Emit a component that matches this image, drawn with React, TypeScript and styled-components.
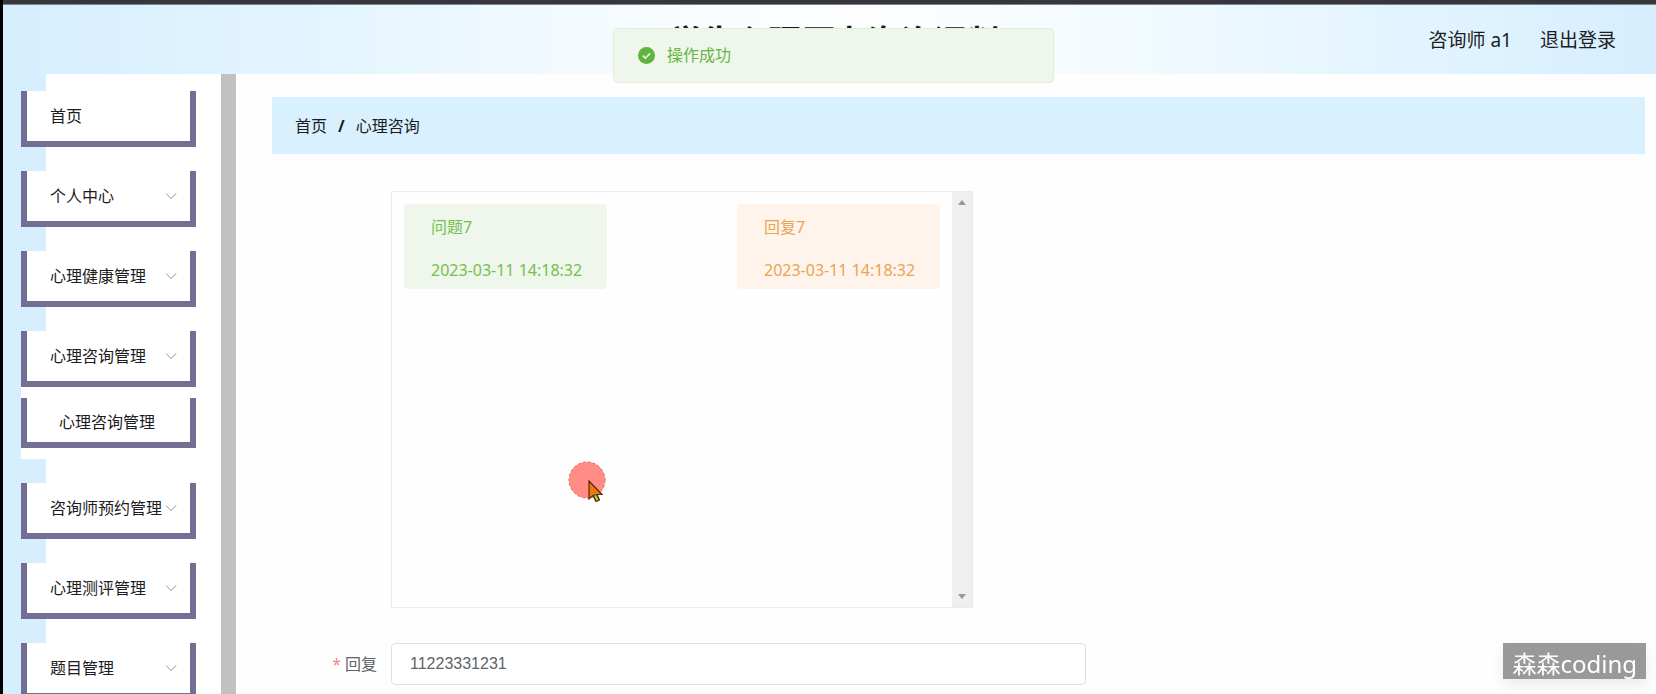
import React from "react";
import styled, { createGlobalStyle, css } from "styled-components";

const GlobalStyle = createGlobalStyle`
  *, *::before, *::after { box-sizing: border-box; }
  body {
    margin: 0;
    color: #1c1c22;
    background: #fefefe;
    font: 16px/24px "Noto Sans", "Noto Sans CJK SC", sans-serif;
  }
  a { color: inherit; text-decoration: none; }
  button { font: inherit; color: inherit; cursor: pointer; }
`;

const Shell = styled.div`
  display: flex;
  flex-direction: column;
  height: 100vh;
  overflow: hidden;
  border-left: 3px solid #000;
`;

const WindowEdge = styled.div`
  flex: none;
  height: 5px;
  background: #37363d;
  border-bottom: 1px solid #7b858d;
`;

const Header = styled.header`
  flex: none;
  display: grid;
  grid-template-columns: 1fr auto 1fr;
  height: 69px;
  background: linear-gradient(to right, #d6eefe 0%, #e4f5ff 20%, #f8fcff 40%, #fefeff 52%, #f4fbff 66%, #e2f4ff 85%, #d6eefe 100%);
`;

const Title = styled.h1`
  grid-column: 2;
  margin: 0;
  padding: 17px 0 0 10px;
  font-size: 33px;
  line-height: 40px;
  font-weight: 700;
  color: #16181c;
`;

const UserArea = styled.div`
  grid-column: 3;
  justify-self: end;
  display: flex;
  align-items: flex-start;
  gap: 28px;
  padding: 21px 40px 0 0;
  font-size: 19px;
  line-height: 28px;
`;

const LogoutButton = styled.button`
  padding: 0;
  border: 0;
  background: none;
  line-height: 28px;
`;

const Body = styled.div`
  flex: 1;
  min-height: 0;
  display: flex;
`;

const Sidebar = styled.nav`
  flex: none;
  width: 233px;
  padding: 17px 25px 0 18px;
  overflow: hidden;
  background: linear-gradient(to right, #d7eefe 43px, #fff 43px);
  border-right: 15px solid #c2c0c0;
`;

const MenuList = styled.ul`
  display: flex;
  flex-direction: column;
  gap: 24px;
  margin: 0;
  padding: 0;
  list-style: none;
`;

const menuBox = css`
  display: flex;
  align-items: center;
  justify-content: space-between;
  width: 100%;
  border: 6px solid #716f94;
  border-top: 0;
  background: #fff;
  white-space: nowrap;
`;

const MenuButton = styled.button`
  ${menuBox}
  height: 56px;
  padding: 0 13px 0 23px;
`;

const MenuLink = styled.a`
  ${menuBox}
  height: 56px;
  padding: 0 13px 0 23px;
`;

const SubMenu = styled.div`
  padding: 11px 0;
  background: #fff;
`;

const SubLink = styled.a`
  ${menuBox}
  height: 50px;
  padding: 4px 0 0 32px;
`;

const Main = styled.main`
  flex: 1;
  min-width: 0;
  padding: 23px 11px 0 36px;
`;

const Breadcrumb = styled.nav`
  display: flex;
  align-items: center;
  gap: 11px;
  height: 57px;
  padding: 0 23px;
  background: #d9f0ff;
`;

const Slash = styled.span`
  font-weight: 700;
`;

const Form = styled.form`
  display: grid;
  grid-template-columns: 105px minmax(0, 695px);
  gap: 35px 14px;
  padding-top: 37px;
`;

const ChatBox = styled.section`
  grid-column: 2;
  display: flex;
  max-width: 582px;
  height: 417px;
  border: 1px solid #ebeaf0;
`;

const Messages = styled.div`
  flex: 1;
  display: flex;
  align-items: flex-start;
  justify-content: space-between;
  padding: 12px;
`;

const Message = styled.article<{ $kind: "question" | "answer" }>`
  width: 203px;
  height: 85px;
  padding: 11px 0 0 27px;
  border-radius: 4px;
  color: ${(p) => (p.$kind === "question" ? "#73c050" : "#e8a553")};
  background: ${(p) => (p.$kind === "question" ? "#eff6eb" : "#fff4ec")};
`;

const MessageText = styled.p`
  margin: 0 0 19px;
  line-height: 24px;
`;

const MessageTime = styled.time`
  display: block;
  line-height: 24px;
`;

const ScrollTrack = styled.div`
  display: flex;
  flex-direction: column;
  align-items: center;
  justify-content: space-between;
  width: 20px;
  padding: 8px 0;
  background: #f0eff0;
`;

const FieldLabel = styled.label`
  text-align: right;
  line-height: 42px;
  color: #606266;
`;

const Required = styled.span`
  margin-right: 4px;
  color: #f58a8a;
`;

const TextInput = styled.input`
  width: 100%;
  height: 42px;
  padding: 0 18px;
  border: 1px solid #dcdfe6;
  border-radius: 4px;
  outline: 0;
  background: #fff;
  color: #606266;
  font: 16px "Liberation Sans", Arial, sans-serif;
`;

const Toast = styled.div`
  position: fixed;
  top: 28px;
  left: calc(50% - 215px);
  display: flex;
  align-items: center;
  gap: 12px;
  width: 441px;
  height: 55px;
  padding: 0 24px 1px;
  border: 1px solid #e1efd8;
  border-radius: 4px;
  background: #eff6eb;
  color: #67b544;
`;

const Pointer = styled.svg`
  position: fixed;
  top: 460px;
  left: 567px;
`;

const Watermark = styled.div`
  position: fixed;
  right: 10px;
  bottom: 15px;
  height: 36px;
  padding: 0 9px;
  background: #999;
  box-shadow: 0 6px 14px rgba(0, 0, 0, 0.08);
  color: #fff;
  font-size: 24px;
  line-height: 42px;
`;

const Chevron = () => (
  <svg width="12" height="12" viewBox="0 0 12 12" fill="none" stroke="#8f9095" aria-hidden="true">
    <path d="M1 3.5 6 8.5 11 3.5" />
  </svg>
);

const Arrow = ({ down = false }: { down?: boolean }) => (
  <svg width="8" height="5" viewBox="0 0 8 5" fill="#999" aria-hidden="true">
    <path d={down ? "M0 0H8L4 5Z" : "M0 5H8L4 0Z"} />
  </svg>
);

const menu: { label: string; children?: string[] }[] = [
  { label: "个人中心" },
  { label: "心理健康管理" },
  { label: "心理咨询管理", children: ["心理咨询管理"] },
  { label: "咨询师预约管理" },
  { label: "心理测评管理" },
  { label: "题目管理" },
];

export default function App() {
  return (
    <>
      <GlobalStyle />
      <Shell>
        <WindowEdge />
        <Header>
          <Title>学生心理压力咨询评判</Title>
          <UserArea>
            <span>咨询师 a1</span>
            <LogoutButton type="button">退出登录</LogoutButton>
          </UserArea>
        </Header>
        <Body>
          <Sidebar>
            <MenuList>
              <li>
                <MenuLink href="#home">首页</MenuLink>
              </li>
              {menu.map((item) => (
                <li key={item.label}>
                  <MenuButton type="button" aria-expanded={!!item.children}>
                    {item.label}
                    <Chevron />
                  </MenuButton>
                  {item.children && (
                    <SubMenu>
                      {item.children.map((child) => (
                        <SubLink key={child} href="#consult">
                          {child}
                        </SubLink>
                      ))}
                    </SubMenu>
                  )}
                </li>
              ))}
            </MenuList>
          </Sidebar>
          <Main>
            <Breadcrumb>
              <a href="#home">首页</a>
              <Slash>/</Slash>
              <span>心理咨询</span>
            </Breadcrumb>
            <Form>
              <ChatBox>
                <Messages>
                  <Message $kind="question">
                    <MessageText>问题7</MessageText>
                    <MessageTime>2023-03-11 14:18:32</MessageTime>
                  </Message>
                  <Message $kind="answer">
                    <MessageText>回复7</MessageText>
                    <MessageTime>2023-03-11 14:18:32</MessageTime>
                  </Message>
                </Messages>
                <ScrollTrack>
                  <Arrow />
                  <Arrow down />
                </ScrollTrack>
              </ChatBox>
              <FieldLabel htmlFor="reply">
                <Required>*</Required>回复
              </FieldLabel>
              <TextInput id="reply" defaultValue="11223331231" />
            </Form>
          </Main>
        </Body>
      </Shell>
      <Toast role="status">
        <svg width="17" height="17" viewBox="0 0 17 17" aria-hidden="true">
          <circle cx="8.5" cy="8.5" r="8.5" fill="#5fb53c" />
          <path d="M4.8 8.7 7.4 11.2 12.3 6.2" fill="none" stroke="#eff6eb" strokeWidth="1.6" />
        </svg>
        操作成功
      </Toast>
      <Pointer width="42" height="44" viewBox="0 0 42 44" aria-hidden="true">
        <circle cx="20" cy="20" r="18" fill="#ff8d85" stroke="#e8625e" strokeDasharray="3 2" />
        <path d="M22 21V39L26 35.5 29 41.5 32.5 40 30 34.5H35Z" fill="#e87a10" stroke="#5a2408" strokeWidth="1.2" />
        <path d="M26.5 35.5 29.3 41.2 32 40 29.5 34.5Z" fill="#b8d432" stroke="#333d12" />
      </Pointer>
      <Watermark>森森coding</Watermark>
    </>
  );
}
